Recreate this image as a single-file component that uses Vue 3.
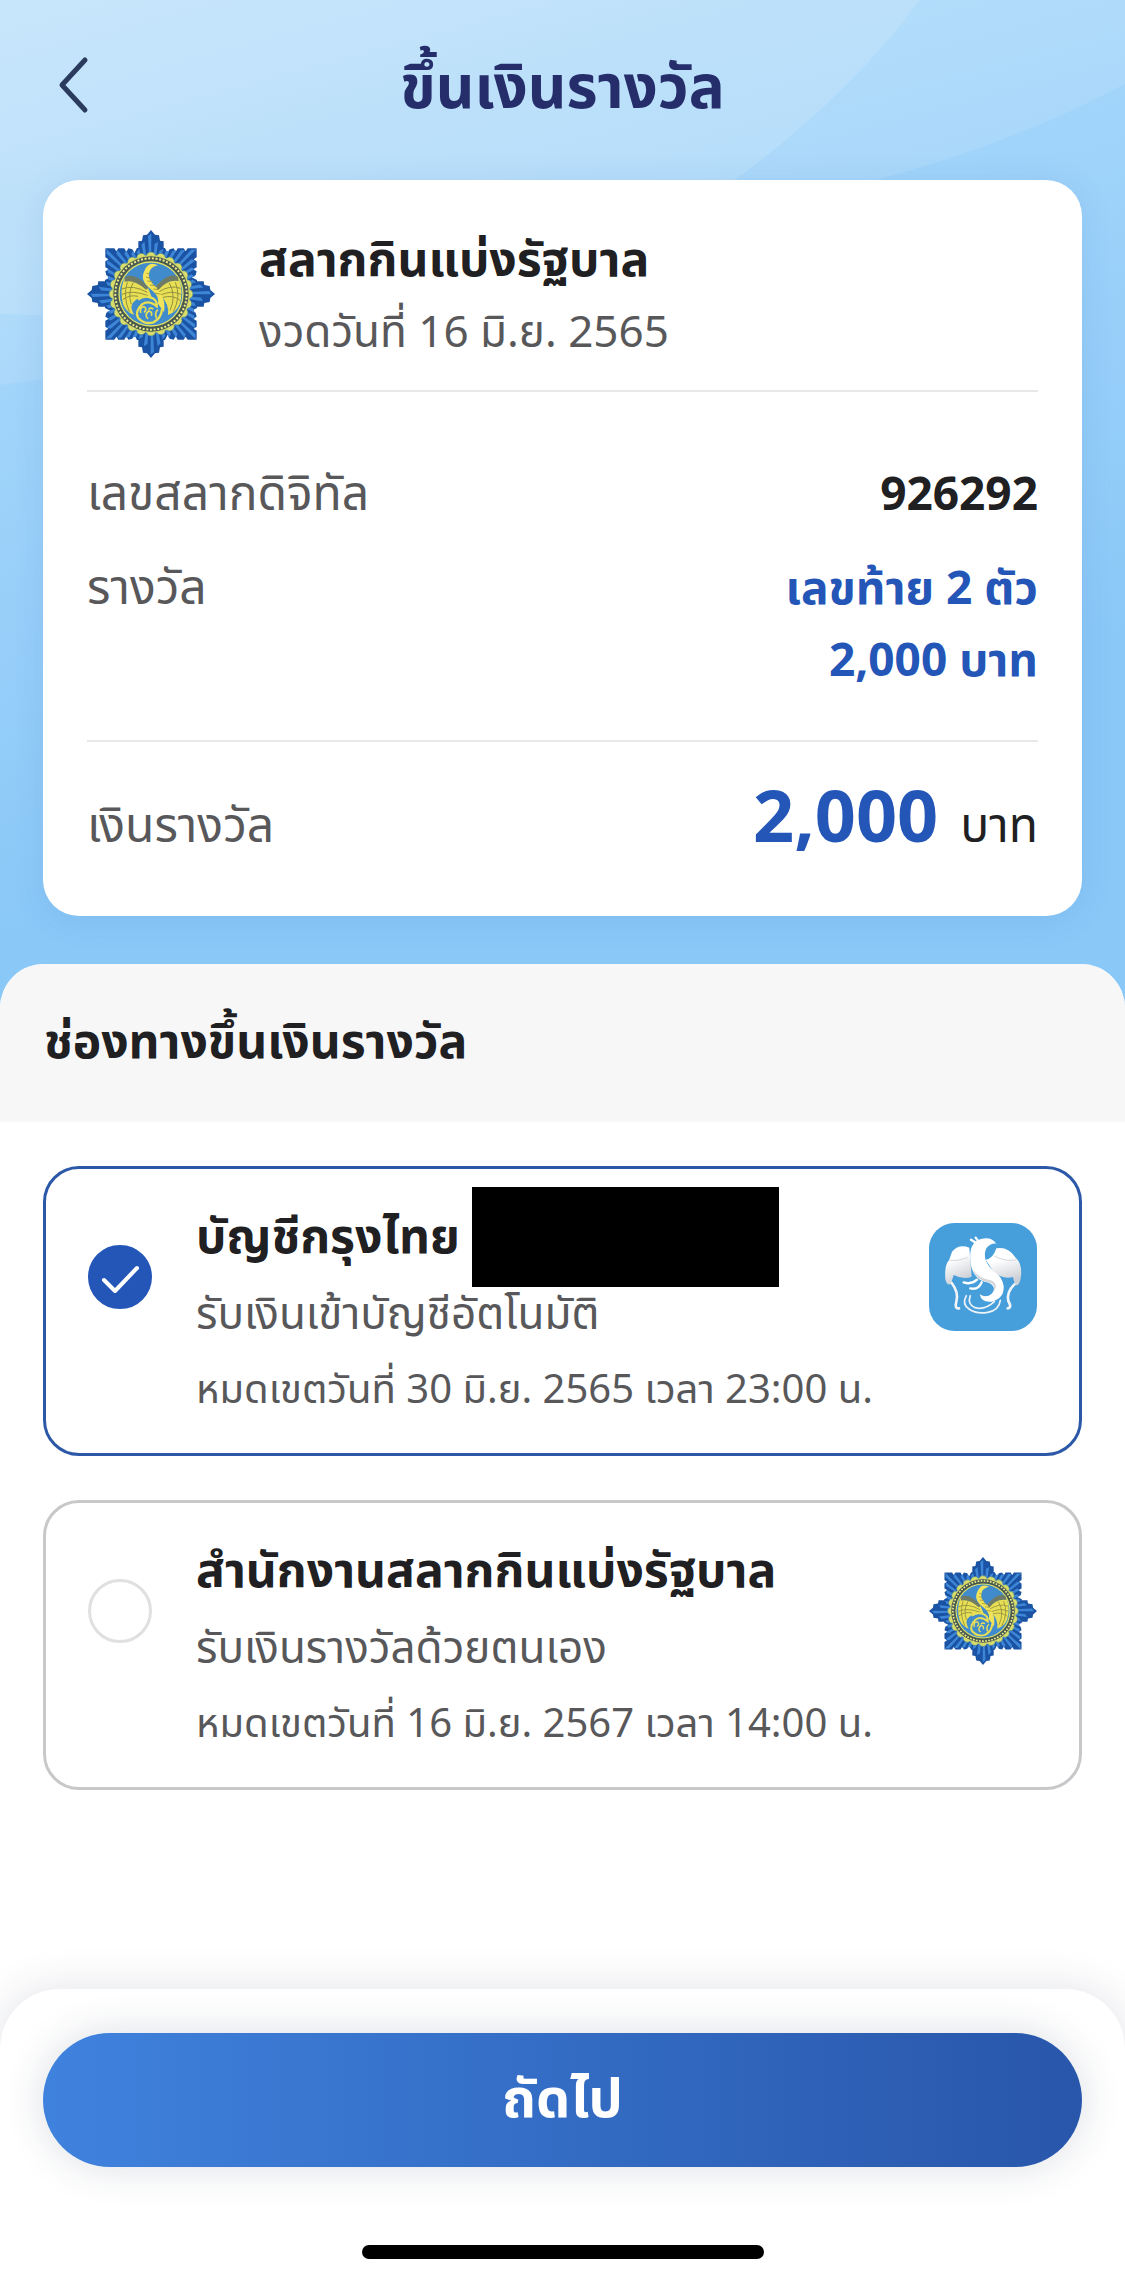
<template>
  <div class="page">
    <section class="hero">
      <svg class="hero-waves" viewBox="0 0 1125 500" preserveAspectRatio="none" aria-hidden="true">
        <path d="M0 0H1125V84Q1010 145 875 180Q460 330 0 385Z" fill="#fff" fill-opacity="0.1" />
        <path d="M0 0H920Q850 95 735 180Q420 330 0 314Z" fill="#fff" fill-opacity="0.13" />
      </svg>

      <header class="top-bar">
        <button type="button" class="back-button" aria-label="ย้อนกลับ">
          <svg width="36" height="60" viewBox="0 0 36 60">
            <path d="M30 5L7 30L30 55" />
          </svg>
        </button>
        <h1>ขึ้นเงินรางวัล</h1>
      </header>

      <article class="ticket">
        <div class="ticket-head">
          <svg class="ticket-emblem" viewBox="-192 -192 384 384" aria-hidden="true">
            <defs>
              <g id="glo-emblem">
                <path
                  v-for="a in [0, 90, 180, 270]"
                  :key="a"
                  :transform="`rotate(${a})`"
                  d="M0 0L-137 -137L-110 -137L-104 -128L-98 -137L-80 -137L-74 -126L-68 -137L-56 -134L-50 -122L-42 -138L-38 -138L-38 -158L-27 -160L-24 -176L-12 -178L0 -192L12 -178L24 -176L27 -160L38 -158L38 -138L42 -138L50 -122L56 -134L68 -137L74 -126L80 -137L98 -137L104 -128L110 -137L137 -137Z"
                  fill="#1a53a3"
                />
                <path
                  v-for="ray in rays"
                  :key="ray.angle"
                  :transform="`rotate(${ray.angle})`"
                  :d="ray.light"
                  fill="#3d85d6"
                />
                <circle v-for="a in scallops" :key="a" r="14" cy="-112" :transform="`rotate(${a})`" fill="#d8dd6c" stroke="#3f7d9c" stroke-width="2" />
                <circle r="117" fill="#d3d765" />
                <circle r="113" fill="#46584f" />
                <circle r="107" fill="none" stroke="#f0eb8c" stroke-width="6" stroke-dasharray="6 5" />
                <circle r="98" fill="#dfe06a" />
                <circle r="94" fill="#3f8bcb" />
                <g transform="translate(-245 -255)">
                  <path d="M236 236Q190 190 164 210Q150 250 162 288Q172 310 194 318Q178 288 196 276Q216 258 248 266Z" fill="#e9df55" />
                  <path d="M256 236Q302 188 328 208Q344 250 330 288Q320 310 296 318Q300 286 276 262Z" fill="#e9df55" />
                  <path d="M238 236Q196 188 166 205L166 218Q196 210 230 242ZM260 232Q300 186 326 203L328 216Q294 210 266 244Z" fill="#6e7b66" />
                  <path d="M158 240Q190 226 234 250M158 256Q190 242 236 260M160 272Q180 256 206 262M174 220Q160 262 180 308M192 220Q174 252 186 286M334 238Q302 226 266 250M334 256Q306 242 270 260M332 274Q310 256 278 266M318 220Q336 262 312 308M300 222Q322 262 302 304" fill="none" stroke="#92913f" stroke-width="3" />
                  <path d="M266 169Q238 154 226 184C212 210 228 228 246 242C266 258 268 270 266 284L284 310Q290 278 274 252C256 228 232 214 240 190Q244 174 266 169Z" fill="#f1e45b" />
                  <path d="M206 272Q226 256 250 268Q264 276 262 292Q238 272 218 286Q196 308 206 326Q226 348 252 340Q276 328 278 300" fill="none" stroke="#e9df55" stroke-width="7" />
                  <path d="M214 312Q210 292 226 294Q234 302 224 310M236 330Q224 318 238 306Q250 308 246 320M252 300Q242 294 238 302M262 328Q254 312 266 302" fill="none" stroke="#e9df55" stroke-width="5" />
                  <path d="M232 192L240 196M230 204L242 208M234 216L250 218M242 228L258 230M252 240L268 242M258 252L274 256" stroke="#a89a36" stroke-width="3" />
                </g>
              </g>
            </defs>
            <use href="#glo-emblem" />
          </svg>
          <div>
            <h2>สลากกินแบ่งรัฐบาล</h2>
            <p>งวดวันที่ 16 มิ.ย. 2565</p>
          </div>
        </div>

        <dl class="ticket-rows">
          <div class="row">
            <dt>เลขสลากดิจิทัล</dt>
            <dd>926292</dd>
          </div>
          <div class="row">
            <dt>รางวัล</dt>
            <dd class="prize">เลขท้าย 2 ตัว<br />2,000 บาท</dd>
          </div>
        </dl>

        <dl class="ticket-total">
          <dt>เงินรางวัล</dt>
          <dd><strong>2,000</strong>บาท</dd>
        </dl>
      </article>
    </section>

    <main class="sheet">
      <h2 class="sheet-title">ช่องทางขึ้นเงินรางวัล</h2>

      <div class="options">
        <label
          v-for="option in options"
          :key="option.id"
          class="option"
          :class="{ selected: channel === option.id }"
        >
          <span class="radio">
            <input v-model="channel" type="radio" name="channel" :value="option.id" />
            <svg v-if="channel === option.id" viewBox="0 0 64 64" aria-hidden="true">
              <path d="M16 35L27 46L49 23" />
            </svg>
          </span>
          <span class="option-text">
            <span class="option-name">
              {{ option.name }}
              <span v-if="option.masked" class="mask"></span>
            </span>
            <span class="option-detail">{{ option.detail }}</span>
            <span class="option-expires">{{ option.expires }}</span>
          </span>

          <svg v-if="option.id === 'krungthai'" class="option-logo" viewBox="84 72 324 324" aria-hidden="true">
            <defs>
              <linearGradient id="wing" x1="0" y1="0" x2="0.3" y2="1">
                <stop offset="0.4" stop-color="#fff" />
                <stop offset="1" stop-color="#cdd0d6" />
              </linearGradient>
            </defs>
            <rect x="84" y="72" width="324" height="324" rx="76" fill="#469edb" />
            <path d="M205 146Q174 134 153 158L144 184Q130 198 133 240Q137 262 150 254L158 228Q184 242 212 234Z" fill="url(#wing)" />
            <path d="M286 148Q322 142 344 176Q364 194 360 232Q356 264 342 258L336 234Q302 242 276 216L254 182Q276 180 286 148Z" fill="url(#wing)" />
            <path d="M146 184Q170 188 200 176M346 182Q320 190 280 172" fill="none" stroke="#d4d8de" stroke-width="3" />
            <path d="M152 252Q174 280 166 308Q160 330 174 328M340 256Q316 280 322 306Q334 326 320 328" fill="none" stroke="#f2f5f8" stroke-width="8" stroke-linecap="round" />
            <path d="M286 134Q270 112 240 120C210 128 206 156 208 184C210 224 232 246 258 250C280 256 284 272 272 284Q256 298 236 286Q242 312 272 308Q310 298 308 262Q304 234 282 220C258 200 244 176 256 148Q268 132 286 134Z" fill="#fff" />
            <path d="M212 206Q226 244 262 250C280 254 284 266 276 280Q296 258 270 244Q230 238 212 206Z" fill="#d3d6dc" />
            <path d="M222 130L210 122M230 124L224 116M228 242Q210 258 188 250M242 250Q232 274 208 268" fill="none" stroke="#fff" stroke-width="7" stroke-linecap="round" />
            <path d="M196 290Q182 316 204 330Q226 346 260 340Q294 334 298 304M208 290Q198 316 222 326Q252 334 280 308" fill="none" stroke="#eef3f8" stroke-width="5" stroke-linecap="round" />
          </svg>
          <svg v-else class="option-logo" viewBox="-192 -192 384 384" aria-hidden="true">
            <use href="#glo-emblem" />
          </svg>
        </label>
      </div>

      <footer class="footer">
        <button type="button" class="next-button">ถัดไป</button>
        <div class="home-indicator"></div>
      </footer>
    </main>
  </div>
</template>

<script setup>
import { ref } from "vue";

const channel = ref("krungthai");

const options = [
  {
    id: "krungthai",
    name: "บัญชีกรุงไทย",
    masked: true,
    detail: "รับเงินเข้าบัญชีอัตโนมัติ",
    expires: "หมดเขตวันที่ 30 มิ.ย. 2565 เวลา 23:00 น.",
  },
  {
    id: "glo",
    name: "สำนักงานสลากกินแบ่งรัฐบาล",
    masked: false,
    detail: "รับเงินรางวัลด้วยตนเอง",
    expires: "หมดเขตวันที่ 16 มิ.ย. 2567 เวลา 14:00 น.",
  },
];

// emblem rays: long at the four arms and at the four corners of the square
const rayLength = (angle) => {
  const rad = ((angle % 90) * Math.PI) / 180;
  const square = 137 / Math.max(Math.cos(rad), Math.sin(rad));
  const arm = 188 / (1 + 1.1 * Math.min(Math.sin(rad), Math.cos(rad)));
  return Math.round(Math.max(square, arm));
};

const rays = Array.from({ length: 48 }, (_, i) => {
  const angle = (i * 45) / 6;
  const r = rayLength(angle);
  return { angle, light: `M0 0L-9 ${14 - r}L1 ${6 - r}Z` };
});

const scallops = Array.from({ length: 24 }, (_, i) => i * 15);
</script>

<style>
body {
  margin: 0;
}
</style>

<style scoped>
.page {
  display: flex;
  flex-direction: column;
  min-height: 100vh;
  background: #8ac8f8;
  color: #202022;
  font-family: "Noto Sans", "Noto Sans Thai", sans-serif;
}

h1,
h2,
p,
dl,
dd {
  margin: 0;
}

.hero {
  position: relative;
  padding: 0 43px 48px;
  background: linear-gradient(165deg, #b9e0fb 0, #a3d5fa 350px, #8ac8f8 900px);
}

.hero-waves {
  position: absolute;
  top: 0;
  left: 0;
  width: 100%;
  height: 500px;
}

.top-bar {
  position: relative;
  display: grid;
  grid-template-columns: 60px 1fr 60px;
  align-items: center;
  height: 180px;
  padding-bottom: 10px;
  box-sizing: border-box;
}

.back-button {
  display: flex;
  padding: 0 12px;
  border: none;
  background: none;
  cursor: pointer;
}

.back-button path {
  fill: none;
  stroke: #2a3b5e;
  stroke-width: 5;
  stroke-linecap: round;
  stroke-linejoin: round;
}

h1 {
  color: #252e6b;
  font-size: 60px;
  line-height: 80px;
  text-align: center;
}

.ticket {
  position: relative;
  padding: 0 44px;
  border-radius: 36px;
  background: #fff;
  box-shadow: 0 4px 32px rgba(40, 100, 170, 0.12);
}

.ticket-head {
  display: flex;
  align-items: center;
  gap: 44px;
  height: 212px;
  padding-top: 18px;
  box-sizing: border-box;
  border-bottom: 2px solid #e8e8ea;
}

.ticket-emblem {
  width: 128px;
  height: 128px;
}

.ticket-head h2 {
  font-size: 48px;
  line-height: 72px;
}

.ticket-head p {
  color: #58585a;
  font-size: 44px;
  line-height: 72px;
}

.ticket-rows {
  display: flex;
  flex-direction: column;
  gap: 22px;
  padding: 64px 0 46px;
  border-bottom: 2px solid #e8e8ea;
  font-size: 48px;
  line-height: 72px;
}

.row {
  display: flex;
  justify-content: space-between;
}

dt {
  color: #58585a;
}

.row dd {
  font-size: 46px;
  font-weight: bold;
  text-align: right;
}

.row .prize {
  color: #2456b8;
}

.ticket-total {
  display: flex;
  align-items: baseline;
  justify-content: space-between;
  padding: 36px 0 56px;
  font-size: 48px;
  line-height: 72px;
}

.ticket-total strong {
  margin-right: 22px;
  color: #2456b8;
  font-size: 72px;
  line-height: 72px;
}

.sheet {
  display: flex;
  flex: 1;
  flex-direction: column;
  overflow: hidden;
  border-radius: 44px 44px 0 0;
  background: #fff;
}

.sheet-title {
  height: 158px;
  padding: 0 44px;
  background: #f7f7f8;
  font-size: 48px;
  line-height: 152px;
}

.options {
  display: flex;
  flex-direction: column;
  gap: 44px;
  padding: 44px 43px;
}

.option {
  display: flex;
  align-items: flex-start;
  gap: 44px;
  height: 290px;
  padding: 30px 42px;
  box-sizing: border-box;
  border: 3px solid #c8c8ca;
  border-radius: 36px;
  cursor: pointer;
}

.option.selected {
  border-color: #2c58a8;
}

.radio {
  display: grid;
  margin-top: 46px;
}

.radio input,
.radio svg {
  grid-area: 1 / 1;
  width: 64px;
  height: 64px;
}

.radio input {
  margin: 0;
  appearance: none;
  border: 3px solid #e0e0e2;
  border-radius: 50%;
}

.radio input:checked {
  border-color: #2456b8;
  background: #2456b8;
}

.radio path {
  fill: none;
  stroke: #fff;
  stroke-width: 4;
  stroke-linecap: round;
  stroke-linejoin: round;
}

.option-text {
  display: flex;
  flex: 1;
  flex-direction: column;
}

.option-name {
  position: relative;
  align-self: flex-start;
  margin-bottom: 4px;
  font-size: 48px;
  font-weight: bold;
  line-height: 72px;
}

.mask {
  position: absolute;
  top: -12px;
  left: calc(100% + 12px);
  width: 307px;
  height: 100px;
  background: #000;
}

.option-detail,
.option-expires {
  color: #58585a;
  font-size: 44px;
  line-height: 75px;
}

.option-expires {
  font-size: 40px;
}

.option-logo {
  width: 108px;
  height: 108px;
  margin-top: 24px;
}

.footer {
  display: flex;
  flex-direction: column;
  align-items: center;
  margin-top: auto;
  padding: 44px 43px 24px;
  border-radius: 60px 60px 0 0;
  background: #fff;
  box-shadow: 0 0 44px rgba(40, 50, 90, 0.14);
}

.next-button {
  width: 100%;
  height: 134px;
  border: none;
  border-radius: 67px;
  background: linear-gradient(90deg, #3f82de, #2856aa);
  box-shadow: 0 0 40px rgba(40, 50, 90, 0.16);
  color: #fff;
  font-family: inherit;
  font-size: 54px;
  font-weight: bold;
  cursor: pointer;
}

.home-indicator {
  width: 402px;
  height: 14px;
  margin-top: 78px;
  border-radius: 7px;
  background: #000;
}
</style>
